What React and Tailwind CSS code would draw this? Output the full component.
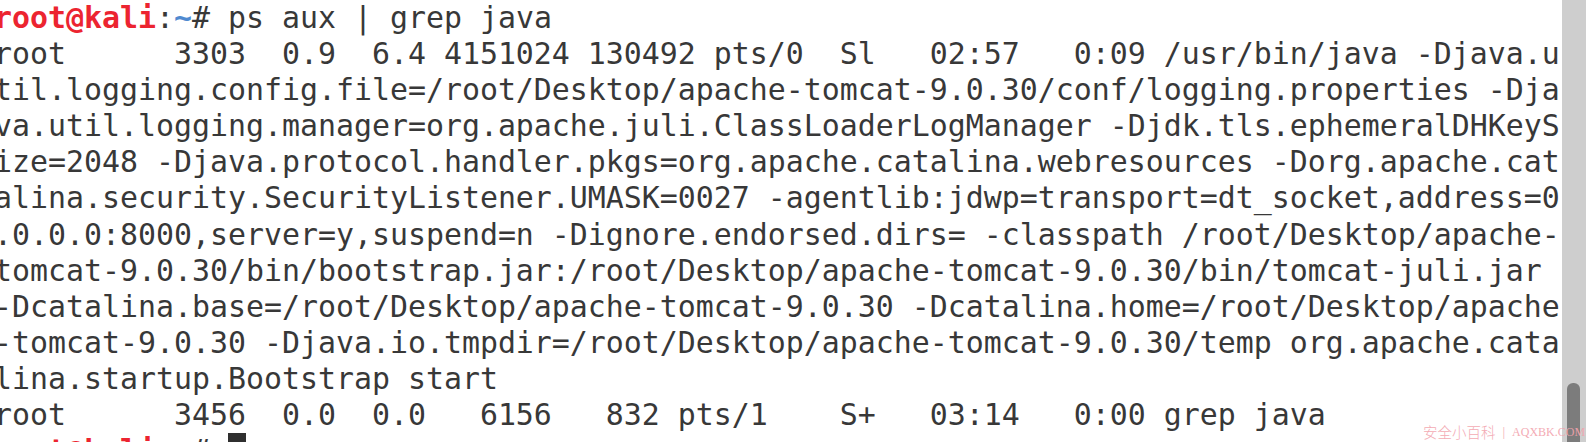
import React from "react";

const lines = [
  "til.logging.config.file=/root/Desktop/apache-tomcat-9.0.30/conf/logging.properties -Dja",
  "va.util.logging.manager=org.apache.juli.ClassLoaderLogManager -Djdk.tls.ephemeralDHKeyS",
  "ize=2048 -Djava.protocol.handler.pkgs=org.apache.catalina.webresources -Dorg.apache.cat",
  "alina.security.SecurityListener.UMASK=0027 -agentlib:jdwp=transport=dt_socket,address=0",
  ".0.0.0:8000,server=y,suspend=n -Dignore.endorsed.dirs= -classpath /root/Desktop/apache-",
  "tomcat-9.0.30/bin/bootstrap.jar:/root/Desktop/apache-tomcat-9.0.30/bin/tomcat-juli.jar ",
  "-Dcatalina.base=/root/Desktop/apache-tomcat-9.0.30 -Dcatalina.home=/root/Desktop/apache",
  "-tomcat-9.0.30 -Djava.io.tmpdir=/root/Desktop/apache-tomcat-9.0.30/temp org.apache.cata",
  "lina.startup.Bootstrap start",
];

function Prompt() {
  return (
    <>
      <span className="font-bold text-[#ec2430]">root@kali</span>
      <span>:</span>
      <span className="font-bold text-[#4f8ad0]">~</span>
      <span># </span>
    </>
  );
}

export default function App() {
  return (
    <div className="relative flex h-[442px] w-[1586px] overflow-hidden bg-white">
      <div className="flex-1 overflow-hidden">
        <div
          className="-ml-[6px] whitespace-pre text-[29.9px] leading-[36.1px] text-[#383838]"
          style={{ fontFamily: '"DejaVu Sans Mono", monospace' }}
        >
          <div>
            <Prompt />
            ps aux | grep java
          </div>
          <div>root      3303  0.9  6.4 4151024 130492 pts/0  Sl   02:57   0:09 /usr/bin/java -Djava.u</div>
          {lines.map((l, i) => (
            <div key={i}>{l}</div>
          ))}
          <div>root      3456  0.0  0.0   6156   832 pts/1    S+   03:14   0:00 grep java</div>
          <div className="flex">
            <Prompt />
            <span className="inline-block h-[36.1px] w-[18px] bg-[#2f2f2f]"></span>
          </div>
        </div>
      </div>
      <div className="flex w-[24px] flex-col justify-end bg-[#cecece]">
        <div className="ml-[5px] h-[59px] w-[13px] rounded-t-[6px] bg-[#7c7c7c]"></div>
      </div>
      <div className="absolute left-[1423px] top-[423px] flex items-center whitespace-pre text-[#f3a3ad] opacity-90">
        <span
          className="text-[14.5px] leading-[18px]"
          style={{ fontFamily: '"Noto Sans CJK SC", sans-serif', fontWeight: 300 }}
        >
          安全小百科
        </span>
        <span className="mx-[7px] text-[13px] leading-[18px]" style={{ fontFamily: '"Liberation Serif", serif' }}>|</span>
        <span className="text-[12px] leading-[18px]" style={{ fontFamily: '"Liberation Serif", serif' }}>
          AQXBK.COM
        </span>
      </div>
    </div>
  );
}
